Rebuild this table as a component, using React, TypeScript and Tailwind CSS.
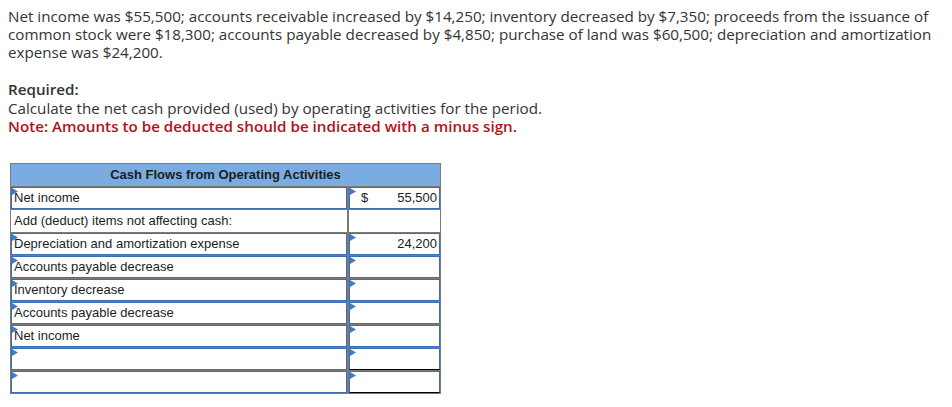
import { ReactElement } from "react";

type Row = {
  label: string;
  input: boolean;
  amount?: string;
  dollar?: boolean;
  total?: boolean;
};

const ROWS: Row[] = [
  { label: "Net income", input: true, amount: "55,500", dollar: true },
  { label: "Add (deduct) items not affecting cash:", input: false },
  { label: "Depreciation and amortization expense", input: true, amount: "24,200" },
  { label: "Accounts payable decrease", input: true },
  { label: "Inventory decrease", input: true },
  { label: "Accounts payable decrease", input: true },
  { label: "Net income", input: true },
  { label: "", input: true, total: true },
  { label: "", input: true, total: true },
];

function Marker(): ReactElement {
  return (
    <svg
      className="absolute left-0 top-0"
      width="6"
      height="7"
      viewBox="0 0 6 7"
    >
      <path d="M0 0 L6 3.5 L0 7 Z" fill="#3f7cc8" />
    </svg>
  );
}

function LabelCell({ row }: { row: Row }): ReactElement {
  return (
    <div
      className={
        row.input
          ? "relative h-[22px] bg-white border border-[#3b6fb5] flex items-center pl-[2px]"
          : "relative h-[22px] bg-white flex items-center pl-[3px]"
      }
    >
      {row.input && <Marker />}
      <span className="truncate">{row.label}</span>
    </div>
  );
}

function AmountCell({ row }: { row: Row }): ReactElement {
  if (!row.input) {
    return <div className="h-[22px] bg-white" />;
  }
  return (
    <div
      className={
        row.total
          ? "relative h-[22px] bg-white border border-[#3b6fb5] border-b-black flex items-center pr-[2px] pl-[11px]"
          : "relative h-[22px] bg-white border border-[#3b6fb5] flex items-center pr-[2px] pl-[11px]"
      }
    >
      <Marker />
      <span className="w-[10px]">{row.dollar ? "$" : ""}</span>
      <span className="grow text-right">{row.amount}</span>
    </div>
  );
}

export default function App(): ReactElement {
  return (
    <div className="w-[952px] h-[407px] bg-white">
      <div className="pl-[8px] pt-[7px] pr-2 text-[15.2px] leading-[18px] text-[#333] font-['Open_Sans',sans-serif]">
        <p>
          Net income was $55,500; accounts receivable increased by $14,250;
          inventory decreased by $7,350; proceeds from the issuance of common
          stock were $18,300; accounts payable decreased by $4,850; purchase of
          land was $60,500; depreciation and amortization expense was $24,200.
        </p>
        <div className="mt-[19px] leading-[18.5px]">
          <p className="font-semibold">Required:</p>
          <p>Calculate the net cash provided (used) by operating activities for the period.</p>
          <p className="font-semibold text-[#b3101c]">
            Note: Amounts to be deducted should be indicated with a minus sign.
          </p>
        </div>
      </div>

      <div className="ml-[10px] mt-[27px] w-[431px] bg-[#7b7b7b] p-[1px] flex flex-col gap-[1px] text-[13px] text-[#1c1c1c] font-['Liberation_Sans',Arial,sans-serif]">
        <div className="h-[22px] bg-[#7aace2] flex items-center justify-center font-bold">
          Cash Flows from Operating Activities
        </div>
        {ROWS.map((row, i) => (
          <div key={i} className="grid grid-cols-[336px_91px] gap-[2px]">
            <LabelCell row={row} />
            <AmountCell row={row} />
          </div>
        ))}
      </div>
    </div>
  );
}
